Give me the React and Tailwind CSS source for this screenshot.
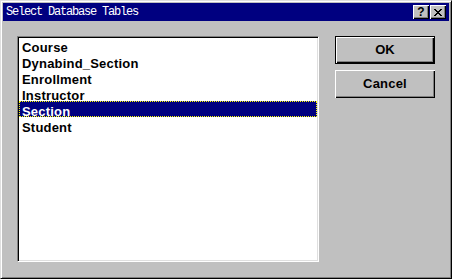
export default function App() {
  const items = ["Course", "Dynabind_Section", "Enrollment", "Instructor", "Section", "Student"];
  const selected = 4;
  const sans = { fontFamily: '"Liberation Sans", Arial, sans-serif' };
  return (
    <div className="w-[452px] h-[279px] bg-[#c0c0c0] overflow-hidden">
      <div className="w-[452px] h-[279px] border border-t-[#dfdfdf] border-l-[#dfdfdf] border-r-black border-b-black shadow-[inset_1px_1px_#ffffff,inset_-1px_-1px_#808080] p-[2px] flex flex-col">
        {/* Title bar */}
        <div className="h-[18px] bg-[#000080] flex items-center pl-[2px] pr-[3px]">
          <div
            className="text-white text-[12px] leading-[18px] tracking-[-1.2px] flex-1 pl-[1px]"
            style={{ fontFamily: '"Liberation Mono", "DejaVu Sans Mono", monospace' }}
          >
            Select Database Tables
          </div>
          <div className="flex gap-[1px]">
            <div
              className="w-[16px] h-[14px] bg-[#c0c0c0] shadow-[inset_1px_1px_#ffffff,inset_-1px_-1px_#000000,inset_-2px_-2px_#808080] flex items-center justify-center text-black font-bold text-[12px] leading-[14px]"
              style={sans}
            >
              ?
            </div>
            <div className="w-[16px] h-[14px] bg-[#c0c0c0] shadow-[inset_1px_1px_#ffffff,inset_-1px_-1px_#000000,inset_-2px_-2px_#808080] flex items-center justify-center">
              <svg width="8" height="7" viewBox="0 0 8 7" shapeRendering="crispEdges">
                <path
                  fill="#000"
                  d="M0 0h2v1h-2zM6 0h2v1h-2zM1 1h2v1h-2zM5 1h2v1h-2zM2 2h4v1h-4zM3 3h2v1h-2zM2 4h4v1h-4zM1 5h2v1h-2zM5 5h2v1h-2zM0 6h2v1h-2zM6 6h2v1h-2z"
                />
              </svg>
            </div>
          </div>
        </div>
        {/* Body */}
        <div className="flex pl-[14px] pt-[15px]">
          <div className="w-[302px] h-[226px] bg-white border border-t-[#808080] border-l-[#808080] border-r-white border-b-white shadow-[inset_1px_1px_#000000,inset_-1px_-1px_#dfdfdf] px-[1px] pt-0">
            {items.map((it, i) => (
              <div
                key={it}
                className={
                  i === selected
                    ? "h-[16px] bg-[#000080] text-white border border-dotted border-[#ffff00] pl-[2px] pt-[3px] font-bold text-[13px] leading-[13px] tracking-[0.2px]"
                    : "h-[16px] text-black pl-[3px] pt-[4px] font-bold text-[13px] leading-[13px] tracking-[0.2px]"
                }
                style={sans}
              >
                {it}
              </div>
            ))}
          </div>
          <div className="flex flex-col gap-[6px] ml-[16px]">
            <div
              className="w-[100px] h-[28px] border border-black shadow-[inset_1px_1px_#ffffff,inset_-1px_-1px_#000000,inset_-2px_-2px_#808080] flex items-center justify-center font-bold text-[13px] text-black"
              style={sans}
            >
              OK
            </div>
            <div
              className="w-[100px] h-[28px] shadow-[inset_1px_1px_#ffffff,inset_-1px_-1px_#000000,inset_-2px_-2px_#808080] flex items-center justify-center font-bold text-[13px] text-black tracking-[0.2px]"
              style={sans}
            >
              Cancel
            </div>
          </div>
        </div>
      </div>
    </div>
  );
}
